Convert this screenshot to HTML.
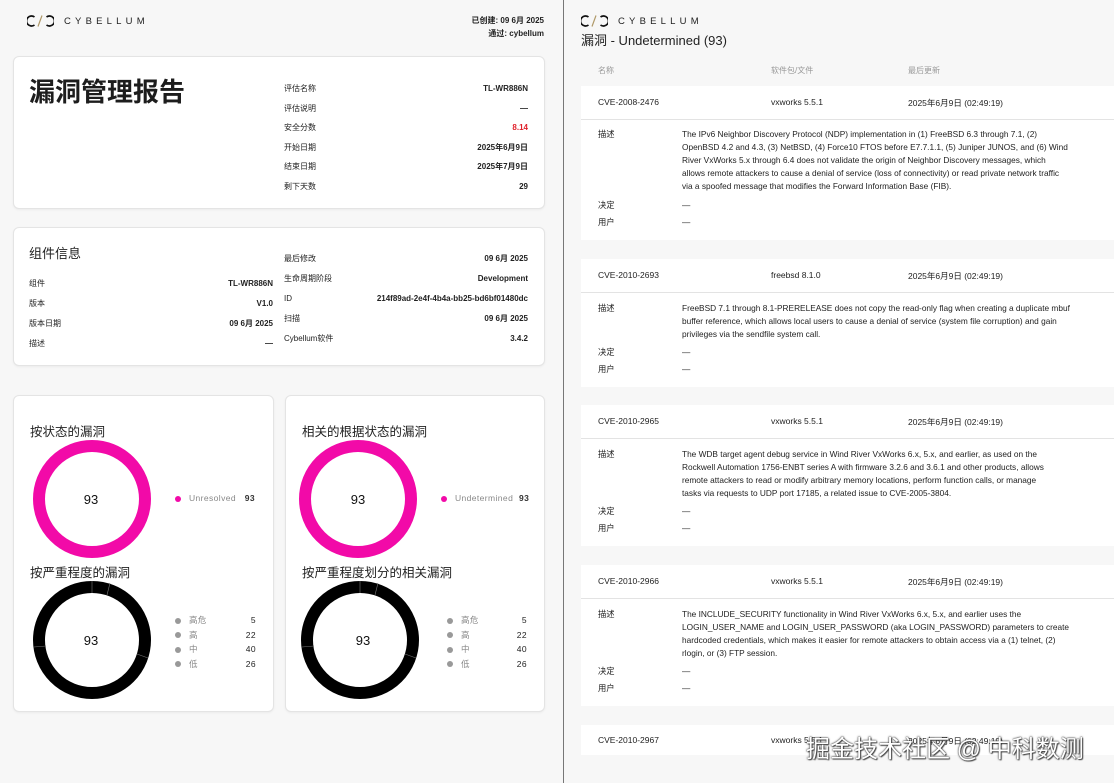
<!DOCTYPE html>
<html><head><meta charset="utf-8"><style>
*{margin:0;padding:0;box-sizing:border-box}
body{width:1114px;height:783px;background:#f7f7f7;font-family:"Liberation Sans","Noto Sans CJK SC",sans-serif;color:#222;position:relative;overflow:hidden}
.a{position:absolute;white-space:nowrap}
.card{position:absolute;background:#fff;border:1px solid #e4e4e4;border-radius:6px;box-shadow:0 1px 2px rgba(0,0,0,.05)}
.s{font-size:8px}
.b{font-weight:bold}
.r{text-align:right}
.logo{position:absolute;display:flex;align-items:center}
.logo span{font-size:9.5px;letter-spacing:4.2px;margin-left:10px;color:#222}
.blk{position:absolute;left:581px;width:533px;background:#fff}
.hd{height:34px;border-bottom:1px solid #e3e3e3;position:relative;font-size:8.5px}
.hd div{position:absolute;top:11px}
.ds{position:relative;font-size:8.3px;line-height:13px}
.ds .l{position:absolute;left:17px}
.ds .t{position:absolute;left:101px;white-space:nowrap}
.dot{display:inline-block;width:6px;height:6px;border-radius:50%;background:#999;margin-right:8px;vertical-align:middle}
.lg{font-size:8.5px;letter-spacing:.4px}
</style></head><body>

<!-- left page -->
<div class="logo" style="left:27px;top:14px">
<svg width="27" height="14" viewBox="0 0 27 14"><path d="M7.5 3A5 5 0 1 0 7.5 11" fill="none" stroke="#111" stroke-width="1.7"/><path d="M11 12.5L15 1.5" stroke="#b09a6a" stroke-width="1.2"/><path d="M19.5 3A5 5 0 1 1 19.5 11" fill="none" stroke="#111" stroke-width="1.7"/></svg>
<span>CYBELLUM</span></div>
<div class="a s b r" style="right:570px;top:15px;width:100px">已创建: 09 6月 2025</div>
<div class="a s b r" style="right:570px;top:28px;width:100px">通过: cybellum</div>

<div class="card" style="left:13px;top:56px;width:532px;height:153px"></div>
<div class="a b" style="left:29px;top:72px;font-size:26px;color:#1d1d1d">漏洞管理报告</div>
<div class="a s" style="left:284px;top:79px;line-height:19.6px">评估名称<br>评估说明<br>安全分数<br>开始日期<br>结束日期<br>剩下天数</div>
<div class="a s b r" style="left:420px;width:108px;top:79px;line-height:19.6px">TL-WR886N<br>—<br><span style="color:#e0202a">8.14</span><br>2025年6月9日<br>2025年7月9日<br>29</div>

<div class="card" style="left:13px;top:227px;width:532px;height:139px"></div>
<div class="a" style="left:29px;top:243px;font-size:13px">组件信息</div>
<div class="a s" style="left:29px;top:274px;line-height:20px">组件<br>版本<br>版本日期<br>描述</div>
<div class="a s b r" style="left:180px;width:93px;top:274px;line-height:20px">TL-WR886N<br>V1.0<br>09 6月 2025<br>—</div>
<div class="a s" style="left:284px;top:249px;line-height:20px">最后修改<br>生命周期阶段<br>ID<br>扫描<br>Cybellum软件</div>
<div class="a s b r" style="left:340px;width:188px;top:249px;line-height:20px">09 6月 2025<br>Development<br>214f89ad-2e4f-4b4a-bb25-bd6bf01480dc<br>09 6月 2025<br>3.4.2</div>

<div class="card" style="left:13px;top:395px;width:261px;height:317px"></div>
<div class="card" style="left:285px;top:395px;width:260px;height:317px"></div>

<div class="a" style="left:30px;top:421px;font-size:12.5px">按状态的漏洞</div>
<div class="a" style="left:302px;top:421px;font-size:12.5px">相关的根据状态的漏洞</div>
<div class="a" style="left:30px;top:562px;font-size:12.5px">按严重程度的漏洞</div>
<div class="a" style="left:302px;top:562px;font-size:12.5px">按严重程度划分的相关漏洞</div>

<svg class="a" style="left:0;top:0" width="560" height="783">
<circle cx="92" cy="499" r="53" fill="none" stroke="#f20aa8" stroke-width="12"/>
<circle cx="358" cy="499" r="53" fill="none" stroke="#f20aa8" stroke-width="12"/>
<circle cx="92" cy="640" r="53" fill="none" stroke="#000" stroke-width="12"/>
<circle cx="360" cy="640" r="53" fill="none" stroke="#000" stroke-width="12"/>
<g stroke="#777" stroke-width=".6"><line x1="92" y1="581" x2="92" y2="593"/><line x1="110" y1="583" x2="107" y2="595"/><line x1="34" y1="647" x2="46" y2="646"/><line x1="148" y1="658" x2="137" y2="654"/>
<line x1="360" y1="581" x2="360" y2="593"/><line x1="378" y1="583" x2="375" y2="595"/><line x1="302" y1="647" x2="314" y2="646"/><line x1="416" y1="658" x2="405" y2="654"/></g>
<g font-size="13" text-anchor="middle" fill="#111" font-family="Liberation Sans,sans-serif"><text x="91" y="504">93</text><text x="358" y="504">93</text><text x="91" y="645">93</text><text x="363" y="645">93</text></g>
</svg>
<div class="a lg" style="left:175px;top:493px;color:#888"><span class="dot" style="background:#f20aa8"></span>Unresolved <b style="color:#333;margin-left:6px">93</b></div>
<div class="a lg" style="left:441px;top:493px;color:#888"><span class="dot" style="background:#f20aa8"></span>Undetermined <b style="color:#333;margin-left:3px">93</b></div>
<div class="a lg" style="left:175px;top:613px;line-height:14.5px;color:#888"><span class="dot"></span>高危<br><span class="dot"></span>高<br><span class="dot"></span>中<br><span class="dot"></span>低</div>
<div class="a lg r" style="left:220px;width:36px;top:613px;line-height:14.5px">5<br>22<br>40<br>26</div>
<div class="a lg" style="left:447px;top:613px;line-height:14.5px;color:#888"><span class="dot"></span>高危<br><span class="dot"></span>高<br><span class="dot"></span>中<br><span class="dot"></span>低</div>
<div class="a lg r" style="left:491px;width:36px;top:613px;line-height:14.5px">5<br>22<br>40<br>26</div>

<div class="a" style="left:563px;top:0;width:1px;height:783px;background:#777"></div>

<!-- right page -->
<div class="logo" style="left:581px;top:14px">
<svg width="27" height="14" viewBox="0 0 27 14"><path d="M7.5 3A5 5 0 1 0 7.5 11" fill="none" stroke="#111" stroke-width="1.7"/><path d="M11 12.5L15 1.5" stroke="#b09a6a" stroke-width="1.2"/><path d="M19.5 3A5 5 0 1 1 19.5 11" fill="none" stroke="#111" stroke-width="1.7"/></svg>
<span>CYBELLUM</span></div>
<div class="a" style="left:581px;top:30px;font-size:13px">漏洞 - Undetermined (93)</div>
<div class="a s" style="left:598px;top:65px;color:#999">名称</div>
<div class="a s" style="left:771px;top:65px;color:#999">软件包/文件</div>
<div class="a s" style="left:908px;top:65px;color:#999">最后更新</div>

<div class="blk" style="top:86px;height:154px"><div class="hd"><div style="left:17px">CVE-2008-2476</div><div style="left:190px">vxworks 5.5.1</div><div style="left:327px">2025年6月9日 (02:49:19)</div></div>
<div class="ds"><div class="l" style="top:8px">描述</div><div class="t" style="top:8px">The IPv6 Neighbor Discovery Protocol (NDP) implementation in (1) FreeBSD 6.3 through 7.1, (2)<br>OpenBSD 4.2 and 4.3, (3) NetBSD, (4) Force10 FTOS before E7.7.1.1, (5) Juniper JUNOS, and (6) Wind<br>River VxWorks 5.x through 6.4 does not validate the origin of Neighbor Discovery messages, which<br>allows remote attackers to cause a denial of service (loss of connectivity) or read private network traffic<br>via a spoofed message that modifies the Forward Information Base (FIB).</div>
<div class="l" style="top:77px;line-height:17px">决定<br>用户</div><div class="l" style="left:101px;top:77px;line-height:17px">—<br>—</div></div></div>

<div class="blk" style="top:259px;height:128px"><div class="hd"><div style="left:17px">CVE-2010-2693</div><div style="left:190px">freebsd 8.1.0</div><div style="left:327px">2025年6月9日 (02:49:19)</div></div>
<div class="ds"><div class="l" style="top:9px">描述</div><div class="t" style="top:9px">FreeBSD 7.1 through 8.1-PRERELEASE does not copy the read-only flag when creating a duplicate mbuf<br>buffer reference, which allows local users to cause a denial of service (system file corruption) and gain<br>privileges via the sendfile system call.</div>
<div class="l" style="top:51px;line-height:17px">决定<br>用户</div><div class="l" style="left:101px;top:51px;line-height:17px">—<br>—</div></div></div>

<div class="blk" style="top:405px;height:141px"><div class="hd"><div style="left:17px">CVE-2010-2965</div><div style="left:190px">vxworks 5.5.1</div><div style="left:327px">2025年6月9日 (02:49:19)</div></div>
<div class="ds"><div class="l" style="top:9px">描述</div><div class="t" style="top:9px">The WDB target agent debug service in Wind River VxWorks 6.x, 5.x, and earlier, as used on the<br>Rockwell Automation 1756-ENBT series A with firmware 3.2.6 and 3.6.1 and other products, allows<br>remote attackers to read or modify arbitrary memory locations, perform function calls, or manage<br>tasks via requests to UDP port 17185, a related issue to CVE-2005-3804.</div>
<div class="l" style="top:64px;line-height:17px">决定<br>用户</div><div class="l" style="left:101px;top:64px;line-height:17px">—<br>—</div></div></div>

<div class="blk" style="top:565px;height:141px"><div class="hd"><div style="left:17px">CVE-2010-2966</div><div style="left:190px">vxworks 5.5.1</div><div style="left:327px">2025年6月9日 (02:49:19)</div></div>
<div class="ds"><div class="l" style="top:9px">描述</div><div class="t" style="top:9px">The INCLUDE_SECURITY functionality in Wind River VxWorks 6.x, 5.x, and earlier uses the<br>LOGIN_USER_NAME and LOGIN_USER_PASSWORD (aka LOGIN_PASSWORD) parameters to create<br>hardcoded credentials, which makes it easier for remote attackers to obtain access via a (1) telnet, (2)<br>rlogin, or (3) FTP session.</div>
<div class="l" style="top:64px;line-height:17px">决定<br>用户</div><div class="l" style="left:101px;top:64px;line-height:17px">—<br>—</div></div></div>

<div class="blk" style="top:725px;height:30px"><div class="hd" style="border:none"><div style="left:17px;top:10px">CVE-2010-2967</div><div style="left:190px;top:10px">vxworks 5.5.1</div><div style="left:327px;top:10px">2025年6月9日 (02:49:19)</div></div></div>

<div class="a" style="left:806px;top:729px;font-size:24px;color:#fff;text-shadow:0 0 2px #333,0 0 1px #222,1px 1px 1px #555">掘金技术社区 @ 中科数测</div>
</body></html>
